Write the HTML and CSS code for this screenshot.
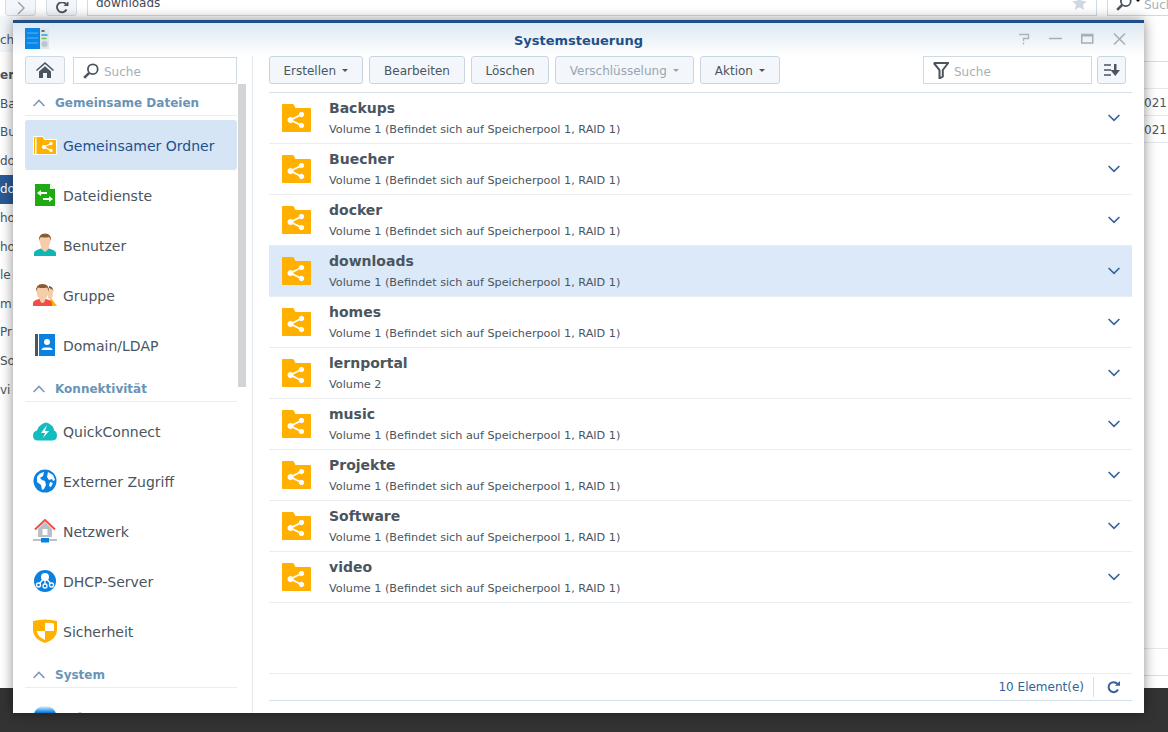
FILE: index.html
```html
<!DOCTYPE html>
<html lang="de">
<head>
<meta charset="utf-8">
<title>Systemsteuerung</title>
<link rel="stylesheet" href="styles.css">
</head>
<body>
<svg class="defs" width="0" height="0" aria-hidden="true">
  <defs><linearGradient id="fade" x1="0" y1="0" x2="0" y2="1"><stop offset="0" stop-color="#fff"/><stop offset=".3" stop-color="#0a80e0"/></linearGradient></defs>
  <symbol id="folder" viewBox="0 0 29 28">
    <path fill="#ffb000" d="M1 0h9.500q1 0 1.500 1l1.500 3h14.500q1 0 1 1v22q0 1-1 1H1q-1 0-1-1V1q0-1 1-1z"/>
    <g fill="#fff" stroke="#fff"><circle cx="8.500" cy="16" r="2.600"/><circle cx="19.500" cy="10.500" r="2.200"/><circle cx="19.500" cy="21.500" r="2.200"/><path fill="none" stroke-width="1.800" d="M19.500 10.500 8.500 16l11 5.500"/></g>
  </symbol>
  <symbol id="chev" viewBox="0 0 12 8"><path fill="none" stroke="#33639b" stroke-width="1.600" d="M.6 1l5.400 5.400L11.400 1"/></symbol>
  <symbol id="up" viewBox="0 0 12 8"><path fill="none" stroke="#7d9ab5" stroke-width="1.600" d="M.6 7L6 1.500 11.400 7"/></symbol>
  <symbol id="loupe" viewBox="0 0 16 16"><circle cx="9.800" cy="6.200" r="4.900" fill="none" stroke="#4a5560" stroke-width="1.800"/><path stroke="#4a5560" stroke-width="2.600" d="M6.200 9.800 1.200 14.800"/></symbol>
  <symbol id="caret" viewBox="0 0 6 3"><path d="M0 0h6L3 3z"/></symbol>
</svg>

<div class="page">
  <header class="browser-bar">
    <button class="nav-btn" type="button"><svg width="8" height="14" viewBox="0 0 8 14"><path fill="none" stroke="#9aa8b6" stroke-width="1.500" d="M1 0l6 6-6 6"/></svg></button>
    <button class="nav-btn" type="button"><svg width="14" height="14" viewBox="0 0 14 14"><path fill="none" stroke="#4a5560" stroke-width="1.900" d="M11.500 7.500A5 5 0 1 1 10.800 2"/><path fill="#4a5560" d="M8.500 4h5V-1z"/></svg></button>
    <div class="url"><span>downloads</span><svg class="star" width="15" height="14" viewBox="0 0 24 23"><path fill="#cfd8e2" d="M12 0l3.600 8 8.400.8-6.300 5.600 1.800 8.400L12 18.500 4.500 22.800l1.800-8.400L0 8.800 8.400 8z"/></svg></div>
    <div class="top-search"><svg width="16" height="16"><use href="#loupe"/></svg><svg class="top-caret" width="6" height="3"><use href="#caret"/></svg><span>Such</span></div>
  </header>
  <div class="behind">
    <ul class="behind-list">
      <li class="first-row">ch</li>
      <li class="bh-strong">em</li>
      <li>Ba</li><li>Bu</li><li>do</li><li class="bh-sel">do</li><li>ho</li><li>ho</li><li>le</li><li>m</li><li>Pr</li><li>So</li><li>vi</li>
    </ul>
    <div class="behind-table">
      <div class="bt-row bt-head"></div>
      <div class="bt-row bt-cell">021</div>
      <div class="bt-row bt-cell bt-last">021</div>
      <div class="bt-gap"></div>
      <div class="bt-foot"></div>
    </div>
  </div>
  <div class="dark-bar"></div>
</div>

<section class="window">
  <div class="titlebar">
    <svg class="app-icon" width="24" height="21" viewBox="0 0 24 21">
      <rect width="15" height="21" fill="#0a86e6"/><path stroke="#5cb6f5" d="M2 5h11M2 10h11M2 15h11"/>
      <rect x="15" width="9" height="21" fill="#dfe5ea"/><path stroke="#33465a" stroke-width="1.500" d="M16.500 3h3"/><path stroke="#20a6c9" stroke-width="1.500" d="M16.500 7h6"/><path stroke="#6cc24a" stroke-width="1.500" d="M16.500 10.500h5"/><circle cx="19.500" cy="16" r="3" fill="#b9c6d1"/>
    </svg>
    <h1 class="win-title">Systemsteuerung</h1>
    <div class="win-tools">
      <svg width="12" height="12" viewBox="0 0 12 12"><path fill="none" stroke="#aab4bd" stroke-width="1.400" d="M1 1.500h9.500v4H5.500V8"/><path stroke="#aab4bd" stroke-width="1.400" d="M5.500 9.500v2"/></svg>
      <svg width="13" height="12" viewBox="0 0 13 12"><path stroke="#a5afb8" stroke-width="1.500" d="M0 5.500h13"/></svg>
      <svg width="13" height="12" viewBox="0 0 13 12"><rect x=".75" y="1.500" width="11" height="8.500" fill="none" stroke="#a5afb8" stroke-width="1.500"/><path stroke="#a5afb8" stroke-width="2" d="M0 2.500h12"/></svg>
      <svg width="13" height="12" viewBox="0 0 13 12"><path stroke="#a5afb8" stroke-width="1.500" d="M1 .5l11 11M12 .5l-11 11"/></svg>
    </div>
  </div>
  <div class="win-body">
    <aside class="sidebar">
      <div class="side-tools">
        <button class="home-btn" type="button"><svg width="18" height="16" viewBox="0 0 18 16"><path fill="#4a5560" d="M9 0L0 8l1 1 8-7 8 7 1-1zM3 9.500L9 4.200l6 5.300V16h-4v-5H7v5H3z"/></svg></button>
        <label class="search side-search"><svg width="16" height="16"><use href="#loupe"/></svg><span>Suche</span></label>
      </div>
      <div class="side-scroll">
        <div class="thumb"></div>
        <h2 class="group"><svg width="12" height="8"><use href="#up"/></svg>Gemeinsame Dateien</h2>
        <a class="item selected"><svg width="24" height="20" viewBox="0 0 24 20"><path fill="#ffb000" stroke="#fff" d="M.5 1.500h6.500l2 2.500H2.500v15.500h-2z"/><path fill="#ffb000" stroke="#fff" d="M3 1.500h7l1.500 3H23.500V19.500H3z"/><g fill="#fff" stroke="#fff"><circle cx="11" cy="12" r="1.700"/><circle cx="18" cy="8.500" r="1.300"/><circle cx="18" cy="15.500" r="1.300"/><path fill="none" stroke-width="1.200" d="M18 8.500 11 12l7 3.500"/></g></svg><span>Gemeinsamer Ordner</span></a>
        <a class="item"><svg width="24" height="24" viewBox="0 0 24 24"><path fill="#1eab12" d="M2 1h15l5 5v17H2z"/><path fill="#fff" d="M17 1l5 5h-5z"/><path fill="#fff" d="M4 10l4-3v2h6v2H8v2zM20 16l-4-3v2h-6v2h6v2z"/></svg><span>Dateidienste</span></a>
        <a class="item"><svg width="24" height="24" viewBox="0 0 24 24"><path fill="#12b5b5" d="M1 23v-3q0-2 3-3l4-1.500h8l4 1.500q3 1 3 3v3z"/><path fill="#f5cda8" d="M8 15.500l4 3.500 4-3.500v-2H8z"/><path fill="#f5cda8" d="M6.500 6q0-5 5.500-5t5.500 5q0 6-3 9-2.500 1.800-5 0-3-3-3-9z"/><path fill="#8a5a32" d="M6 8q-.7-7.500 6-7.500T18 8q-.7-3.500-2-4-4 1-8 0-1.300.5-2 4z"/></svg><span>Benutzer</span></a>
        <a class="item"><svg width="24" height="24" viewBox="0 0 24 24"><path fill="#ffb000" d="M15 23l3-8 6 8z"/><path fill="#f5cda8" d="M15 8q1-3 3-2t2 4q0 4-2 7l-3-2z"/><path fill="#8a5a32" d="M16 3q4 0 4.500 6-1-3-2.500-3l-2-1z"/><path fill="#f44b4b" d="M0 23v-3q0-2 3-3l3-1h7l3 1q3 1 3 3v3z"/><path fill="#f5cda8" d="M3.500 7q0-5 6-5t6 5q0 6-3 9-1 4-3 4t-3-4q-3-3-3-9z"/><path fill="#8a5a32" d="M3 9Q2.500 1 9.500 1T16 9q-.7-3.500-2-4.500-4.500 1-9 0Q3.700 5.500 3 9z"/></svg><span>Gruppe</span></a>
        <a class="item"><svg width="24" height="24" viewBox="0 0 24 24"><rect x="2" y="1" width="3" height="22" fill="#4a5560"/><rect x="6" y="1" width="16" height="22" fill="#0a80e0"/><circle cx="14" cy="9" r="3" fill="#fff"/><path fill="#fff" d="M8.500 17q0-2 3-2.500h5q3 .5 3 2.500z"/></svg><span>Domain/LDAP</span></a>
        <h2 class="group"><svg width="12" height="8"><use href="#up"/></svg>Konnektivität</h2>
        <a class="item"><svg width="24" height="20" viewBox="0 0 24 20"><path fill="#12bdbd" d="M5 19.500q-5 0-5-5 0-4 4-5 1-4 4-5.500 5-5 10 0 3 2 3 5.500 3 1 3 5 0 5-5 5z"/><path fill="#fff" d="M14 4l-6 8h4l-2 5 6-7h-4z"/></svg><span>QuickConnect</span></a>
        <a class="item"><svg width="24" height="24" viewBox="0 0 24 24"><circle cx="12" cy="12" r="11.500" fill="#0a80e0"/><path fill="#fff" d="M4 8q2-4 7-5l-1 4-3 2 2 2 3 1 1 4-2 4-2 1-1-5-4-3zM15 3l5 3 2 5-2 1-1-2-3 1-2-3zM17 13l3 1-2 4-2-1z"/></svg><span>Externer Zugriff</span></a>
        <a class="item"><svg width="24" height="24" viewBox="0 0 24 24"><path fill="#b8c0c8" d="M5 10l7-7 7 7v8H5z"/><path fill="none" stroke="#f44b4b" stroke-width="2" d="M2 10.500L12 1l10 9.500"/><path fill="#fff" d="M9.500 10h5v6h-5z"/><path stroke="#b8c0c8" stroke-width="2" d="M0 21h24"/><rect x="8" y="19" width="8" height="4.500" fill="#0a80e0"/></svg><span>Netzwerk</span></a>
        <a class="item"><svg width="24" height="24" viewBox="0 0 24 24"><circle cx="12" cy="12" r="11" fill="#0a80e0"/><circle cx="12" cy="8" r="4" fill="#fff"/><g fill="none" stroke="#fff" stroke-width="1.300"><circle cx="5.500" cy="16" r="2"/><circle cx="12" cy="17" r="2"/><circle cx="18.500" cy="16" r="2"/><path d="M12 10v5M10 10.500l-3.500 4M14 10.500l3.500 4"/></g></svg><span>DHCP-Server</span></a>
        <a class="item"><svg width="24" height="24" viewBox="0 0 24 24"><path fill="#ffb000" d="M0 2q12-3 24 0v9q0 9-12 13Q0 20 0 11z"/><path fill="#fff" d="M12 4q6-.5 9 .5V12h-9zM12 12v9q-7-3-8.500-9z"/></svg><span>Sicherheit</span></a>
        <h2 class="group"><svg width="12" height="8"><use href="#up"/></svg>System</h2>
        <a class="item cut"><svg width="24" height="24" viewBox="0 0 24 24"><circle cx="12" cy="12" r="11.500" fill="url(#fade)"/></svg><span>Infocenter</span></a>
      </div>
    </aside>
    <main class="content">
      <div class="toolbar">
        <button class="btn btn-a" type="button">Erstellen<svg width="6" height="3"><use href="#caret"/></svg></button>
        <button class="btn btn-b" type="button">Bearbeiten</button>
        <button class="btn btn-c" type="button">Löschen</button>
        <button class="btn off" type="button">Verschlüsselung<svg width="6" height="3"><use href="#caret"/></svg></button>
        <button class="btn" type="button">Aktion<svg width="6" height="3"><use href="#caret"/></svg></button>
        <label class="search filter"><svg width="16" height="17" viewBox="0 0 16 17"><path fill="none" stroke="#4a5560" stroke-width="2" d="M.8 1h14.400L9.800 8v6.500L6.500 16.500V8L.8 1"/></svg><span>Suche</span></label>
        <button class="sort" type="button"><svg width="16" height="12" viewBox="0 0 16 12"><path stroke="#4a5560" stroke-width="1.600" d="M0 1h7M0 6h7M0 11h7"/><path fill="#4a5560" d="M10 0h2.500v6H16l-4.750 6L6.500 6H10z"/></svg></button>
      </div>
      <ul class="rows">
        <li class="row"><svg class="fld" width="29" height="28"><use href="#folder"/></svg><div class="txt"><strong>Backups</strong><small>Volume 1 (Befindet sich auf Speicherpool 1, RAID 1)</small></div><svg class="chv" width="12" height="8"><use href="#chev"/></svg></li>
        <li class="row"><svg class="fld" width="29" height="28"><use href="#folder"/></svg><div class="txt"><strong>Buecher</strong><small>Volume 1 (Befindet sich auf Speicherpool 1, RAID 1)</small></div><svg class="chv" width="12" height="8"><use href="#chev"/></svg></li>
        <li class="row"><svg class="fld" width="29" height="28"><use href="#folder"/></svg><div class="txt"><strong>docker</strong><small>Volume 1 (Befindet sich auf Speicherpool 1, RAID 1)</small></div><svg class="chv" width="12" height="8"><use href="#chev"/></svg></li>
        <li class="row active"><svg class="fld" width="29" height="28"><use href="#folder"/></svg><div class="txt"><strong>downloads</strong><small>Volume 1 (Befindet sich auf Speicherpool 1, RAID 1)</small></div><svg class="chv" width="12" height="8"><use href="#chev"/></svg></li>
        <li class="row"><svg class="fld" width="29" height="28"><use href="#folder"/></svg><div class="txt"><strong>homes</strong><small>Volume 1 (Befindet sich auf Speicherpool 1, RAID 1)</small></div><svg class="chv" width="12" height="8"><use href="#chev"/></svg></li>
        <li class="row"><svg class="fld" width="29" height="28"><use href="#folder"/></svg><div class="txt"><strong>lernportal</strong><small>Volume 2</small></div><svg class="chv" width="12" height="8"><use href="#chev"/></svg></li>
        <li class="row"><svg class="fld" width="29" height="28"><use href="#folder"/></svg><div class="txt"><strong>music</strong><small>Volume 1 (Befindet sich auf Speicherpool 1, RAID 1)</small></div><svg class="chv" width="12" height="8"><use href="#chev"/></svg></li>
        <li class="row"><svg class="fld" width="29" height="28"><use href="#folder"/></svg><div class="txt"><strong>Projekte</strong><small>Volume 1 (Befindet sich auf Speicherpool 1, RAID 1)</small></div><svg class="chv" width="12" height="8"><use href="#chev"/></svg></li>
        <li class="row"><svg class="fld" width="29" height="28"><use href="#folder"/></svg><div class="txt"><strong>Software</strong><small>Volume 1 (Befindet sich auf Speicherpool 1, RAID 1)</small></div><svg class="chv" width="12" height="8"><use href="#chev"/></svg></li>
        <li class="row"><svg class="fld" width="29" height="28"><use href="#folder"/></svg><div class="txt"><strong>video</strong><small>Volume 1 (Befindet sich auf Speicherpool 1, RAID 1)</small></div><svg class="chv" width="12" height="8"><use href="#chev"/></svg></li>
      </ul>
      <footer class="status">
        <span class="count">10 Element(e)</span>
        <svg width="13" height="13" viewBox="0 0 13 13"><path fill="none" stroke="#33639b" stroke-width="2" d="M11 8.500A5 5 0 1 1 10.500 3"/><path fill="#33639b" d="M8 4.800h5V0z"/></svg>
      </footer>
    </main>
  </div>
</section>
</body>
</html>
```

FILE: styles.css
```css
* { box-sizing: border-box; }
html, body { margin: 0; height: 100%; }
body { width: 1168px; height: 732px; overflow: hidden; position: relative; background: #fff; font-family: "DejaVu Sans", Verdana, sans-serif; color: #4a5560; }
.defs { position: absolute; }
ul { list-style: none; margin: 0; padding: 0; }
button { font: inherit; color: inherit; cursor: default; }

.page { height: 732px; display: flex; flex-direction: column; }
.browser-bar { height: 17px; flex: none; display: flex; align-items: flex-end; margin-top: -1px; padding-left: 5px; gap: 10px; overflow: hidden; }
.nav-btn { width: 31px; height: 30px; flex: none; padding: 15px 0 0; border: 1px solid #d3dde8; border-radius: 3px; background: #f3f7fb; display: flex; align-items: flex-start; justify-content: center; }
.url { width: 1010px; height: 30px; flex: none; border: 1px solid #d0dbe6; background: #fff; display: flex; align-items: flex-end; justify-content: space-between; padding: 0 9px 5px 8px; font-size: 12px; line-height: 14px; color: #414b55; }
.star { margin-bottom: 0; }
.top-search { flex: 1; height: 30px; border: 1px solid #d0dbe6; display: flex; align-items: flex-end; padding: 0 0 4px 8px; gap: 3px; font-size: 12px; color: #a7b0b9; white-space: nowrap; }
.top-search span { margin-bottom: -1px; }
.top-caret { margin-bottom: 9px; }

.behind { flex: 1; display: flex; justify-content: space-between; min-height: 0; }
.behind-list { width: 13px; overflow: hidden; font-size: 12px; color: #4a5560; }
.behind-list li { height: 28.6px; line-height: 28.6px; white-space: nowrap; }
.behind-list .first-row { height: 45px; line-height: 48px; background: linear-gradient(#f4f7fa 36px, #fff 36px); }
.behind-list .bh-strong { font-weight: 700; }
.behind-list .bh-sel { background: #2a5a96; color: #fff; }
.behind-table { width: 24px; overflow: hidden; display: flex; flex-direction: column; padding-top: 45px; }
.bt-row { height: 27px; flex: none; border-top: 1px solid #e4e9ef; font-size: 12px; line-height: 29px; color: #4a5560; white-space: nowrap; }
.bt-head { border-top-color: #d6dfe8; }
.bt-last { border-bottom: 1px solid #e4e9ef; height: 28px; }
.bt-gap { flex: 1; }
.bt-foot { height: 28px; flex: none; border-top: 1px solid #e4e9ef; border-bottom: 1px solid #d6dfe8; margin-bottom: 12px; }
.dark-bar { height: 44px; flex: none; background: #333; }

.window { position: absolute; left: 13px; top: 20px; width: 1131px; height: 693px; background: #fff; border-top: 3px solid #1f4f8a; box-shadow: 0 0 12px rgba(0,0,0,.45); display: flex; flex-direction: column; overflow: hidden; }
.titlebar { height: 33px; flex: none; display: flex; align-items: center; justify-content: center; position: relative; background: linear-gradient(#dde8f1, #fff); }
.app-icon { position: absolute; left: 12px; top: 5px; }
.win-title { margin: 0; font-size: 13px; font-weight: 700; color: #1f4f8a; position: relative; top: 1px; }
.win-tools { position: absolute; right: 18px; top: 10px; display: flex; gap: 19px; }
.win-body { flex: 1; display: flex; min-height: 0; }

.sidebar { width: 240px; flex: none; border-right: 1px solid #e3e8ed; padding-left: 12px; display: flex; flex-direction: column; min-height: 0; }
.side-tools { display: flex; gap: 8px; width: 212px; height: 28px; flex: none; }
.home-btn { width: 40px; height: 28px; border: 1px solid #cdd9e5; border-radius: 3px; background: #f3f7fb; padding: 0; display: flex; align-items: center; justify-content: center; }
.search { display: flex; align-items: center; border: 1px solid #cfdae5; background: #fff; font-size: 12px; color: #a7b0b9; gap: 5px; }
.search span { padding-top: 2px; }
.side-search { width: 164px; height: 27px; margin-top: 1px; padding-left: 9px; }
.side-scroll { position: relative; flex: 1; min-height: 0; overflow: hidden; width: 221px; }
.thumb { position: absolute; left: 213px; top: 0; width: 8px; height: 303px; background: #d2d4d6; }
.group { width: 212px; height: 32px; margin: 0 0 4px; padding: 0 0 5px 8px; display: flex; align-items: flex-end; gap: 10px; border-bottom: 1px solid #e9edf1; font-size: 12px; line-height: 14px; font-weight: 700; color: #6a94b5; }
.group svg { margin-bottom: 3px; }
.item { width: 212px; height: 50px; display: flex; align-items: center; gap: 6px; padding-left: 8px; font-size: 14px; color: #4a5560; white-space: nowrap; border-radius: 3px; }
.item svg { width: 24px; flex: none; }
.item span { padding-top: 2px; }
.item.selected { background: #d5e5f6; color: #1f4f8a; }
.item.cut { color: #c8cdd3; }

.content { flex: 1; min-width: 0; display: flex; flex-direction: column; padding: 0 12px 12px 16px; }
.toolbar { height: 37px; flex: none; display: flex; align-items: flex-start; gap: 6px; border-bottom: 1px solid #d3dfe9; }
.btn { height: 28px; padding: 1px 14px 0; display: flex; align-items: center; gap: 6px; border: 1px solid #c9d6e2; border-radius: 3px; background: #f3f7fb; font-size: 12px; color: #4a5560; white-space: nowrap; fill: #4a5560; }
.btn-a { padding-left: 13.500px; padding-right: 13.500px; }
.btn-b { padding-left: 14.500px; padding-right: 14.500px; }
.btn-c { padding-left: 13px; padding-right: 13px; }
.btn.off { color: #9aa4ae; fill: #9aa4ae; }
.filter { margin-left: auto; width: 169px; height: 28px; padding-left: 9px; }
.filter svg { flex: none; }
.filter span { padding-top: 4px; }
.sort { width: 29px; height: 28px; margin: 0 6px 0 -1px; padding: 0; border: 1px solid #c9d6e2; border-radius: 3px; background: #f3f7fb; display: flex; align-items: center; justify-content: center; }
.rows { flex: 1; min-height: 0; }
.row { height: 51px; display: flex; align-items: center; padding: 0 12px 0 13px; border-bottom: 1px solid #e9edf1; }
.row.active { background: #dce9f8; }
.fld { flex: none; margin-right: 18px; }
.txt { flex: 1; display: flex; flex-direction: column; gap: 7px; min-width: 0; }
.txt strong { font-size: 14px; line-height: 16px; color: #4a5560; }
.txt small { font-size: 11.230px; line-height: 14px; color: #4a5560; }
.chv { flex: none; }
.status { height: 28px; flex: none; display: flex; align-items: center; justify-content: flex-end; border-top: 1px solid #e9edf1; border-bottom: 1px solid #d3dfe9; padding-right: 12px; }
.count { font-size: 12px; color: #33639b; padding-right: 9px; margin-right: 13px; border-right: 1px solid #d3dfe9; height: 20px; line-height: 20px; }
```
